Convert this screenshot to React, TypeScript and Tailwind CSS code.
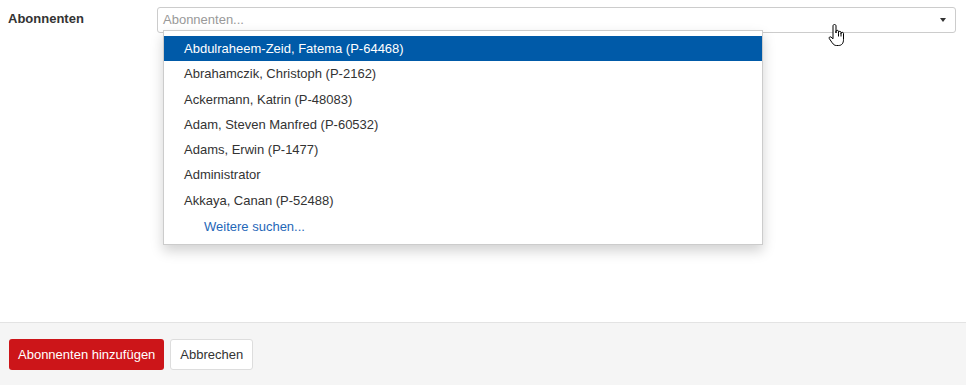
import React from 'react';

const people = [
  'Abdulraheem-Zeid, Fatema (P-64468)',
  'Abrahamczik, Christoph (P-2162)',
  'Ackermann, Katrin (P-48083)',
  'Adam, Steven Manfred (P-60532)',
  'Adams, Erwin (P-1477)',
  'Administrator',
  'Akkaya, Canan (P-52488)',
];

const HandCursor = () => (
  <svg width="20" height="26" viewBox="0 0 20 26" className="absolute left-[828px] top-[23px]">
    <path
      d="M6.5 1.5 C7.6 1.5 8 2.2 8 3 L8 10 L8 8.3 C8 7 10.5 7 10.5 8.3 L10.5 10.5 L10.5 9.3 C10.5 8 13 8 13 9.3 L13 11 L13 10.3 C13 9 15.5 9 15.5 10.3 L15.5 16.5 C15.5 20 14 22.5 10.5 22.5 L8.5 22.5 C6.5 22.5 5.5 21.5 4.2 19.8 L1.3 15.6 C0.6 14.6 1.8 13.3 3 14 L5 15.8 L5 3 C5 2.2 5.4 1.5 6.5 1.5 Z"
      fill="#fff"
      stroke="#000"
      strokeWidth="1"
      strokeLinejoin="round"
    />
    <path d="M10.5 10.5 L10.5 13.5 M13 11 L13 13.5" stroke="#000" strokeWidth="1" />
  </svg>
);

export default function App() {
  return (
    <div className="w-[966px] h-[385px] bg-white flex flex-col text-[13px] text-[#333] font-['Liberation_Sans',Arial,sans-serif]">
      <div className="flex-1 relative">
        <div className="flex pt-[7px]">
          <div className="w-[157px] pl-[8px] pt-[2px] font-bold leading-[20px]">Abonnenten</div>
          <div className="relative w-[799px]">
            <div className="h-[26px] border border-[#ccc] rounded-[3px] flex items-center justify-between pl-[5px] pr-[9px]">
              <span className="text-[#999]">Abonnenten...</span>
              <span className="w-0 h-0 border-l-[3px] border-r-[3px] border-t-[4px] border-l-transparent border-r-transparent border-t-[#333]" />
            </div>
            <div className="absolute left-[6px] top-[23px] w-[600px] bg-white border border-[#ccc] shadow-[0_6px_12px_rgba(0,0,0,0.18)] pt-[5px] pb-[6px]">
              {people.map((p, i) => (
                <div
                  key={p}
                  className={
                    i === 0
                      ? 'h-[25.3px] leading-[26px] pl-[20px] bg-[#005aa8] text-white'
                      : 'h-[25.3px] leading-[26px] pl-[20px] text-[#333]'
                  }
                >
                  {p}
                </div>
              ))}
              <div className="h-[25.3px] leading-[28px] pl-[40px] text-[#1f67b8]">Weitere suchen...</div>
            </div>
          </div>
        </div>
        <HandCursor />
      </div>
      <div className="h-[63px] bg-[#f5f5f5] border-t border-[#e3e3e3] flex items-start gap-[6px] pl-[9px] pt-[16px]">
        <button className="h-[31px] px-[9px] bg-[#cc1519] text-white rounded-[3px] text-[13px]">
          Abonnenten hinzufügen
        </button>
        <button className="h-[31px] px-[9px] bg-white text-[#333] border border-[#ddd] rounded-[3px] text-[13px]">
          Abbrechen
        </button>
      </div>
    </div>
  );
}
